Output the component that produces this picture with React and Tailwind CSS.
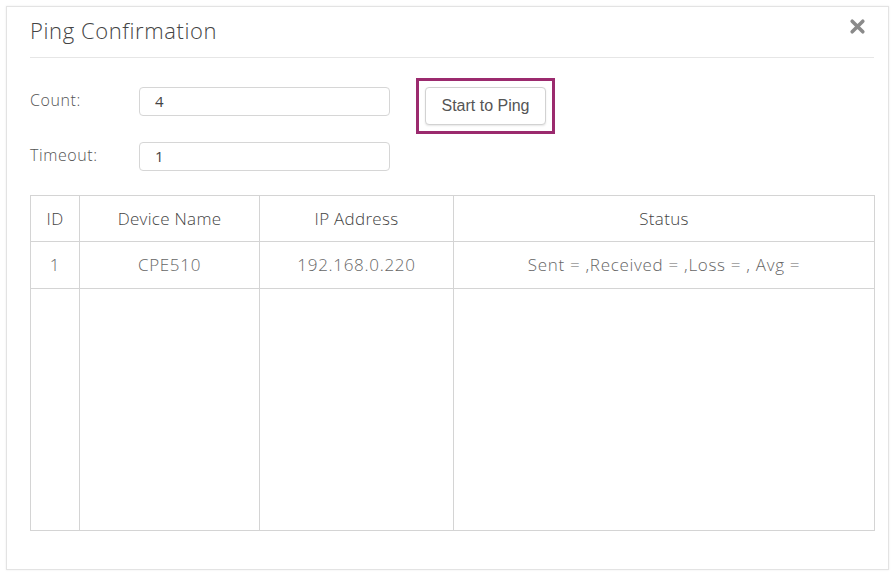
import React from "react";

export default function App() {
  const rows = [{ id: 1, name: "CPE510", ip: "192.168.0.220", status: "Sent = ,Received = ,Loss = , Avg =" }];

  return (
    <div className="w-[895px] h-[573px] bg-white p-[6px]" style={{ fontFamily: '"Open Sans", "Liberation Sans", sans-serif' }}>
      <div className="w-[883px] h-[564px] border border-[#e3e3e3] shadow-[0_0_2px_rgba(0,0,0,0.08)] pl-[23px] pr-[14px] text-[#444] font-light">
        {/* header */}
        <div className="flex items-start justify-between h-[51px] border-b border-[#e6e6e6]">
          <h1 className="text-[22px] text-[#444] mt-[7px] tracking-[0.6px]">Ping Confirmation</h1>
          <button className="w-[18px] h-[18px] mr-[7px] mt-[10px]">
            <svg viewBox="0 0 16 16" className="w-[17px] h-[17px]">
              <path d="M3 3 L13 13 M13 3 L3 13" stroke="#8a8a8a" strokeWidth="3.4" strokeLinecap="round" />
            </svg>
          </button>
        </div>

        {/* form */}
        <div className="flex mt-[20px]">
          <div className="flex flex-col gap-[26px] pt-[9px]">
            <div className="flex items-center">
              <span className="w-[109px] text-[16px] tracking-[0.6px] text-[#555] -mt-[4px]">Count:</span>
              <div className="w-[251px] h-[29px] border border-[#d6d6d6] rounded-[4px] px-[15px] flex items-center text-[15px] text-[#444] font-normal">4</div>
            </div>
            <div className="flex items-center">
              <span className="w-[109px] text-[16px] tracking-[0.6px] text-[#555] -mt-[4px]">Timeout:</span>
              <div className="w-[251px] h-[29px] border border-[#d6d6d6] rounded-[4px] px-[15px] flex items-center text-[15px] text-[#444] font-normal">1</div>
            </div>
          </div>
          <div className="ml-[26px] border-[3px] border-[#9b2a6e] w-[139px] h-[56px] p-[6px]">
            <button
              className="w-full h-full border border-[#d2d2d2] rounded-[4px] bg-white text-[16px] text-[#555] font-normal shadow-[0_1px_2px_rgba(0,0,0,0.1)]"
              style={{ fontFamily: '"Liberation Sans", Arial, sans-serif' }}
            >
              Start to Ping
            </button>
          </div>
        </div>

        {/* table */}
        <table className="mt-[24px] w-[845px] border-collapse border border-[#d4d4d4] text-center">
          <thead>
            <tr className="h-[46px] text-[17px] text-[#444] tracking-[0.3px]">
              <th className="w-[49px] border border-[#d4d4d4] font-light">ID</th>
              <th className="w-[180px] border border-[#d4d4d4] font-light">Device Name</th>
              <th className="w-[194px] border border-[#d4d4d4] font-light">IP Address</th>
              <th className="border border-[#d4d4d4] font-light">Status</th>
            </tr>
          </thead>
          <tbody>
            {rows.map((r) => (
              <tr key={r.id} className="h-[47px] text-[17px] text-[#666] tracking-[0.7px]">
                <td className="border border-[#d4d4d4]">{r.id}</td>
                <td className="border border-[#d4d4d4]">{r.name}</td>
                <td className="border border-[#d4d4d4]">{r.ip}</td>
                <td className="border border-[#d4d4d4]">{r.status}</td>
              </tr>
            ))}
            <tr className="h-[242px]">
              <td className="border border-[#d4d4d4]"></td>
              <td className="border border-[#d4d4d4]"></td>
              <td className="border border-[#d4d4d4]"></td>
              <td className="border border-[#d4d4d4]"></td>
            </tr>
          </tbody>
        </table>
      </div>
    </div>
  );
}
